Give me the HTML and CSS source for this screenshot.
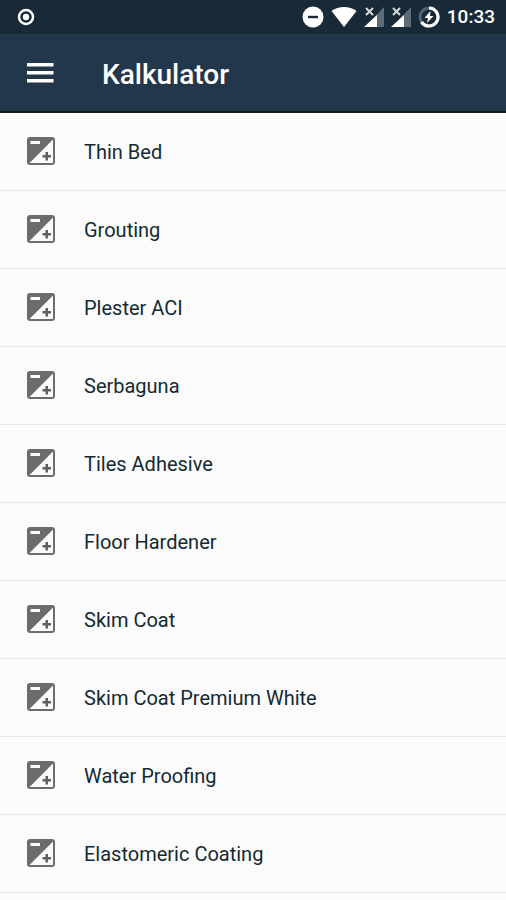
FILE: index.html
```html
<!DOCTYPE html>
<html lang="id">
<head>
<meta charset="utf-8">
<meta name="viewport" content="width=device-width, initial-scale=1">
<title>Kalkulator</title>
<link rel="stylesheet" href="styles.css">
</head>
<body>
<svg class="defs" aria-hidden="true">
  <symbol id="exposure" viewBox="0 0 30 30">
    <rect x="1" y="1" width="28" height="28" rx="3" fill="#6c6c6c"/>
    <path d="M27 3.500V27H3.500Z" fill="#fbfbfb"/>
    <path d="M4.500 5h9.500v3H4.500z" fill="#fbfbfb"/>
    <path d="M19.500 16h2.500v3h3v2.500H22v3h-2.500v-3h-3V19h3z" fill="#5f5f5f"/>
  </symbol>
  <symbol id="signal" viewBox="0 0 20 20">
    <path d="M20 0V20H1Z" fill="#5b6b77"/>
    <path d="M0 0H11V10H0Z" fill="#182a38"/>
    <path d="M13 8V20H0Z" fill="#fff"/>
    <path d="M2 1l7 7M9 1L2 8" stroke="#d4dade" stroke-width="2"/>
  </symbol>
</svg>
<div class="status">
  <svg class="record" viewBox="0 0 18 18" aria-hidden="true"><circle cx="9" cy="9" r="7" fill="none" stroke="#fff" stroke-width="2.500"/><circle cx="9" cy="9" r="3.200" fill="#fff"/></svg>
  <div class="indicators">
    <svg class="disc" viewBox="0 0 22 22" aria-hidden="true"><circle cx="11" cy="11" r="10.500" fill="#fff"/><path d="M6 9.800h10v2.400H6z" fill="#182a38"/></svg>
    <svg class="wifi" viewBox="0 0 26 22" aria-hidden="true"><path d="M.5 5C7.500-.5 18.500-.5 25.500 5L13 21Z" fill="#fff"/></svg>
    <svg class="signal" aria-hidden="true"><use href="#signal"/></svg>
    <svg class="signal" aria-hidden="true"><use href="#signal"/></svg>
    <svg class="disc" viewBox="0 0 22 22" aria-hidden="true"><circle cx="11" cy="11" r="9" fill="none" stroke="#53636f" stroke-width="3"/><path d="M11 2A9 9 0 1 1 3.500 16" fill="none" stroke="#fff" stroke-width="3.200"/><path d="M12.500 5L6.500 12h3.500l-1 5L15.500 10H12z" fill="#fff"/></svg>
    <time class="time">10:33</time>
  </div>
</div>
<header class="appbar">
  <button class="menu" type="button" aria-label="Menu"><svg viewBox="0 0 28 20" aria-hidden="true"><path d="M0 0h26.500v3.500H0zM0 8h26.500v3.500H0zM0 16h26.500v3.500H0z" fill="#fff"/></svg></button>
  <h1 class="title">Kalkulator</h1>
</header>
<main>
  <ul class="list">
    <li><a class="row" href="#"><svg class="icon" aria-hidden="true"><use href="#exposure"/></svg>Thin Bed</a></li>
    <li><a class="row" href="#"><svg class="icon" aria-hidden="true"><use href="#exposure"/></svg>Grouting</a></li>
    <li><a class="row" href="#"><svg class="icon" aria-hidden="true"><use href="#exposure"/></svg>Plester ACI</a></li>
    <li><a class="row" href="#"><svg class="icon" aria-hidden="true"><use href="#exposure"/></svg>Serbaguna</a></li>
    <li><a class="row" href="#"><svg class="icon" aria-hidden="true"><use href="#exposure"/></svg>Tiles Adhesive</a></li>
    <li><a class="row" href="#"><svg class="icon" aria-hidden="true"><use href="#exposure"/></svg>Floor Hardener</a></li>
    <li><a class="row" href="#"><svg class="icon" aria-hidden="true"><use href="#exposure"/></svg>Skim Coat</a></li>
    <li><a class="row" href="#"><svg class="icon" aria-hidden="true"><use href="#exposure"/></svg>Skim Coat Premium White</a></li>
    <li><a class="row" href="#"><svg class="icon" aria-hidden="true"><use href="#exposure"/></svg>Water Proofing</a></li>
    <li><a class="row" href="#"><svg class="icon" aria-hidden="true"><use href="#exposure"/></svg>Elastomeric Coating</a></li>
  </ul>
</main>
</body>
</html>
```
FILE: styles.css
```css
* {
  box-sizing: border-box;
}

body {
  margin: 0;
  background: #fbfbfb;
  color: #142a32;
  font-family: Roboto, "Liberation Sans", sans-serif;
}

svg {
  display: block;
  flex: none;
}

.defs {
  position: absolute;
  width: 0;
  height: 0;
}

.status {
  display: flex;
  align-items: center;
  justify-content: space-between;
  height: 34px;
  padding: 0 11px 0 17px;
  background: #182a38;
  color: #fff;
}

.record {
  width: 18px;
  height: 18px;
}

.indicators {
  display: flex;
  align-items: center;
  gap: 7px;
}

.disc {
  width: 22px;
  height: 22px;
}

.signal {
  width: 20px;
  height: 20px;
}

.wifi {
  width: 26px;
  height: 22px;
}

.time {
  font-size: 19px;
  font-weight: 500;
  line-height: 24px;
}

.appbar {
  display: flex;
  align-items: center;
  gap: 47px;
  height: 79px;
  padding: 0 27px;
  border-bottom: 2px solid #111b24;
  background: #22374c;
  color: #fff;
}

.menu {
  padding: 0;
  border: 0;
  background: none;
}

.menu svg {
  width: 28px;
  height: 20px;
}

.title {
  margin: 0;
  padding-top: 4px;
  font-size: 28px;
  font-weight: 500;
  line-height: 32px;
}

.list {
  margin: 0;
  padding: 0;
  list-style: none;
}

.row {
  display: flex;
  align-items: center;
  gap: 28px;
  height: 78px;
  padding: 0 26px;
  border-bottom: 1px solid #e8e8e8;
  color: inherit;
  font-size: 20px;
  line-height: 24px;
  text-decoration: none;
}

.icon {
  width: 30px;
  height: 30px;
  margin-bottom: 2px;
}
```
